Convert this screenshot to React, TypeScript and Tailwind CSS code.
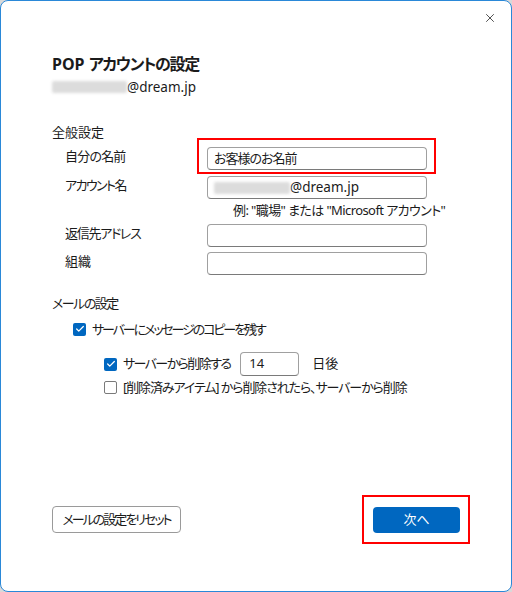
import { Check, X } from "lucide-react";

const font = {
  fontFamily: "'Noto Sans', 'Noto Sans CJK JP', sans-serif",
};

function Field({ label, track, children, marked }: { label: string; track: string; children?: React.ReactNode; marked?: boolean }) {
  return (
    <div className="flex items-start">
      <div className="w-[155px] pl-[13px] leading-[18px]">
        <span className={track}>{label}</span>
      </div>
      <div className="relative">
        {marked && <span className="absolute -left-[10px] -top-[9px] -right-[9px] -bottom-[4px] border-2 border-[#ff0000]" />}
        <div className="w-[220px] h-[23px] rounded-[4px] border border-[#a0a0a0] border-b-[#7a7a7a] bg-white flex items-center px-[6px] leading-none">
          {children}
        </div>
      </div>
    </div>
  );
}

function Box({ checked }: { checked?: boolean }) {
  return checked ? (
    <span className="w-[13px] h-[13px] rounded-[2px] bg-[#0067c0] flex items-center justify-center shrink-0">
      <Check size={10} strokeWidth={3} className="text-white" />
    </span>
  ) : (
    <span className="w-[13px] h-[13px] rounded-[2px] border border-[#7a7a7a] bg-white shrink-0" />
  );
}

function Hidden({ w }: { w: number }) {
  return <span className="inline-block h-[12px] bg-[#dcdcdc] blur-[1.5px] rounded-[2px]" style={{ width: w }} />;
}

export default function App() {
  return (
    <div className="w-[512px] h-[592px] bg-[#d9d9d9]">
      <div
        className="relative w-[512px] h-[592px] bg-white border border-[#2a88d8] rounded-[8px] flex flex-col px-[51px] text-[13px] text-[#1b1b1b] [font-feature-settings:'palt']"
        style={font}
      >
        <button className="absolute right-[14px] top-[10px] text-[#1b1b1b]">
          <X size={14} strokeWidth={1.3} />
        </button>

        <h1 className="mt-[53px] text-[16px] font-bold leading-[20px]">
          POP <span className="tracking-[-1.3px]">アカウントの設定</span>
        </h1>
        <div className="mt-[3px] flex items-center leading-[20px]">
          <Hidden w={75} />
          <span className="text-[13.5px]">@dream.jp</span>
        </div>

        <div className="mt-[25px] leading-[20px]">全般設定</div>
        <div className="mt-[5px] flex flex-col">
          <Field label="自分の名前" track="tracking-[-0.8px]" marked>
            <span className="tracking-[-1px]">お客様のお名前</span>
          </Field>
          <div className="mt-[6px]">
            <Field label="アカウント名" track="tracking-[-1.6px]">
              <Hidden w={76} />
              <span className="text-[13.5px]">@dream.jp</span>
            </Field>
          </div>
          <div className="pl-[181px] mt-[3px] leading-[16px] h-[16px] whitespace-nowrap tracking-[-0.6px]">
            例: "職場" または "Microsoft アカウント"
          </div>
          <div className="mt-[6px]">
            <Field label="返信先アドレス" track="tracking-[-1.3px]" />
          </div>
          <div className="mt-[5px]">
            <Field label="組織" track="" />
          </div>
        </div>

        <div className="mt-[18px] leading-[20px] tracking-[-1.5px]">メールの設定</div>
        <div className="mt-[6px] ml-[21px] flex items-center gap-[6px] leading-[20px]">
          <Box checked />
          <span className="tracking-[-2.1px]">サーバーにメッセージのコピーを残す</span>
        </div>
        <div className="mt-[13px] ml-[52px] flex items-center h-[24px]">
          <Box checked />
          <span className="ml-[6px] tracking-[-1.6px]">サーバーから削除する</span>
          <div className="ml-[10px] w-[59px] h-[24px] rounded-[4px] border border-[#a0a0a0] border-b-[#7a7a7a] flex items-center px-[8px]">
            14
          </div>
          <span className="ml-[13px]">日後</span>
        </div>
        <div className="mt-[1px] ml-[52px] flex items-center gap-[6px] leading-[20px]">
          <Box />
          <span className="tracking-[-1.1px]">[削除済みアイテム] から削除されたら、サーバーから削除</span>
        </div>

        <div className="mt-auto mb-[58px] flex items-center justify-between">
          <button className="w-[129px] h-[27px] rounded-[4px] border border-[#9a9a9a] bg-white text-[13px] whitespace-nowrap tracking-[-2px]">
            メールの設定をリセット
          </button>
          <div className="relative">
            <span className="absolute -left-[11px] -top-[12px] -right-[10px] -bottom-[11px] border-2 border-[#ff0000]" />
            <button className="w-[87px] h-[26px] rounded-[4px] bg-[#0067c0] text-white text-[13px]">次へ</button>
          </div>
        </div>
      </div>
    </div>
  );
}
